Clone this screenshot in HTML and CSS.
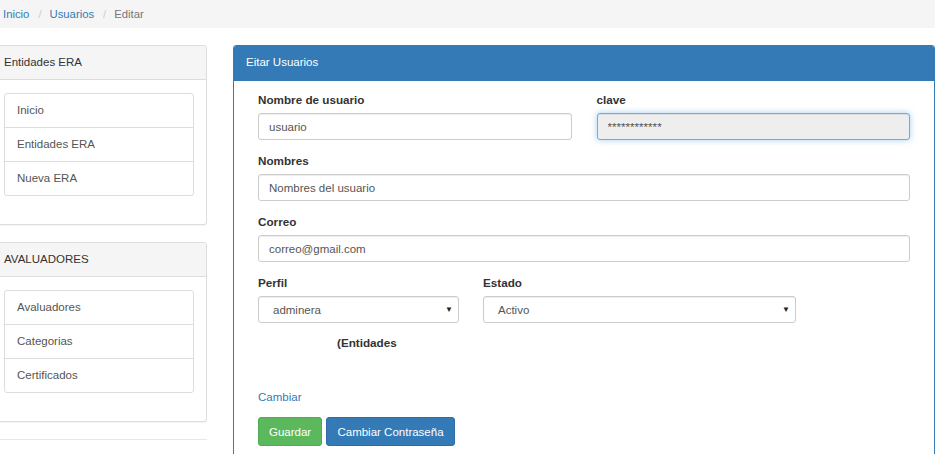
FILE: index.html
```html
<!DOCTYPE html>
<html lang="es">
<head>
<meta charset="utf-8">
<title>Editar Usuario</title>
<link rel="stylesheet" href="styles.css">
</head>
<body>
<div class="page">
  <ol class="breadcrumb">
    <li><a href="#">Inicio</a></li>
    <li class="sep">/</li>
    <li><a href="#">Usuarios</a></li>
    <li class="sep">/</li>
    <li class="active">Editar</li>
  </ol>
  <div class="row">
    <aside class="sidebar">
      <div class="panel">
        <div class="panel-heading">Entidades ERA</div>
        <div class="panel-body">
          <ul class="list-group">
            <li class="list-item">Inicio</li>
            <li class="list-item">Entidades ERA</li>
            <li class="list-item">Nueva ERA</li>
          </ul>
        </div>
      </div>
      <div class="panel">
        <div class="panel-heading">AVALUADORES</div>
        <div class="panel-body">
          <ul class="list-group">
            <li class="list-item">Avaluadores</li>
            <li class="list-item">Categorias</li>
            <li class="list-item">Certificados</li>
          </ul>
        </div>
      </div>
      <div class="panel-stub"></div>
    </aside>
    <main class="panel panel-primary main">
      <div class="panel-heading">Eitar Usuarios</div>
      <div class="panel-body">
        <form class="form">
          <div class="grid two">
            <div class="form-group">
              <label>Nombre de usuario</label>
              <input class="form-control" type="text" value="usuario">
            </div>
            <div class="form-group">
              <label>clave</label>
              <input class="form-control focused" type="text" value="************" readonly>
            </div>
          </div>
          <div class="form-group">
            <label>Nombres</label>
            <input class="form-control" type="text" value="Nombres del usuario">
          </div>
          <div class="form-group">
            <label>Correo</label>
            <input class="form-control" type="text" value="correo@gmail.com">
          </div>
          <div class="grid selects">
            <div class="form-group">
              <label>Perfil</label>
              <div class="select"><span>adminera</span><span class="caret">▼</span></div>
            </div>
            <div class="form-group">
              <label>Estado</label>
              <div class="select"><span>Activo</span><span class="caret">▼</span></div>
            </div>
          </div>
          <div class="entidades">(Entidades</div>
          <p class="link-row"><a href="#">Cambiar</a></p>
          <div class="actions">
            <button type="button" class="btn btn-success">Guardar</button>
            <button type="button" class="btn btn-primary">Cambiar Contraseña</button>
          </div>
        </form>
      </div>
    </main>
  </div>
</div>
</body>
</html>
```

FILE: styles.css
```css
* { box-sizing: border-box; }
html, body { margin: 0; padding: 0; background: #fff; overflow: hidden; }
body {
  font-family: "Liberation Sans", Arial, Helvetica, sans-serif;
  font-size: 11.5px;
  line-height: 16px;
  color: #333;
}
a { color: #337ab7; text-decoration: none; }
.page { margin-left: -9px; width: 944px; }

.breadcrumb {
  list-style: none;
  margin: 0 0 17px;
  padding: 6px 12px;
  height: 28px;
  background: #f5f5f5;
  border-radius: 3px;
  display: flex;
  font-size: 11.3px;
}
.breadcrumb li { display: block; }
.breadcrumb .sep { color: #ccc; padding: 0 8px 0 9px; }
.breadcrumb .active { color: #777; }

.row { display: flex; gap: 26px; align-items: flex-start; }
.sidebar { width: 216px; flex: none; }
.main { flex: 1; min-width: 0; }

.panel {
  border: 1px solid #ddd;
  border-radius: 3px;
  background: #fff;
  margin-bottom: 17px;
  box-shadow: 0 1px 1px rgba(0,0,0,.05);
}
.panel-heading {
  background: #f5f5f5;
  border-bottom: 1px solid #ddd;
  padding: 8px 12px;
  line-height: 17px;
  color: #333;
  border-radius: 2px 2px 0 0;
}
.panel-body { padding: 13px 12px 12px; }

.list-group { list-style: none; margin: 0 0 16px; padding: 0; }
.list-item {
  border: 1px solid #ddd;
  margin-bottom: -1px;
  padding: 8px 12px;
  line-height: 17px;
  height: 35px;
  color: #555;
}
.list-item:first-child { border-radius: 3px 3px 0 0; }
.list-item:last-child { border-radius: 0 0 3px 3px; margin-bottom: 0; }

.panel-stub { border-top: 1px solid #e8e8e8; margin-top: 16px; height: 20px; }

.panel-primary { border-color: #337ab7; margin-bottom: 0; }
.panel-primary .panel-heading {
  background: #337ab7;
  border-color: #337ab7;
  color: #fff;
  padding: 8px 12px 9px;
  font-size: 11.5px;
}
.main .panel-body { padding: 11px 24px 40px; }

.grid { display: grid; }
.grid.two { grid-template-columns: 1fr 1fr; column-gap: 25px; }
.grid.selects { grid-template-columns: 201px 313px; column-gap: 24px; }

.form-group { margin-bottom: 13px; }
label { display: block; font-weight: bold; font-size: 11.7px; margin-bottom: 5px; line-height: 16px; color: #333; }
.form-control {
  display: block;
  width: 100%;
  height: 27px;
  padding: 4px 10px;
  font-family: "Liberation Sans", Arial, Helvetica, sans-serif;
  font-size: 11.5px;
  color: #555;
  background: #fff;
  border: 1px solid #ccc;
  border-radius: 3px;
  box-shadow: inset 0 1px 1px rgba(0,0,0,.075);
  outline: none;
}
.form-control.focused {
  background: #eee;
  border-color: #66afe9;
  box-shadow: inset 0 1px 1px rgba(0,0,0,.075), 0 0 6px rgba(102,175,233,.6);
  font-size: 11.6px;
}

.select {
  display: flex;
  justify-content: space-between;
  align-items: center;
  height: 27px;
  padding: 0 5px 0 14px;
  border: 1px solid #ccc;
  border-radius: 3px;
  color: #555;
  background: #fff;
  box-shadow: inset 0 1px 1px rgba(0,0,0,.075);
}
.select .caret { font-size: 8px; color: #222; }

.entidades { font-weight: bold; font-size: 11.7px; padding-left: 79px; line-height: 16px; margin-top: -1px; }
.link-row { margin: 38px 0 12px; line-height: 16px; }

.actions { display: flex; gap: 4px; }
.btn {
  height: 29px;
  padding: 0 10px;
  font-family: "Liberation Sans", Arial, Helvetica, sans-serif;
  font-size: 11.5px;
  color: #fff;
  border: 1px solid transparent;
  border-radius: 3px;
  cursor: pointer;
}
.btn-success { background: #5cb85c; border-color: #4cae4c; width: 64px; }
.btn-primary { background: #337ab7; border-color: #2e6da4; width: 129px; }
```
